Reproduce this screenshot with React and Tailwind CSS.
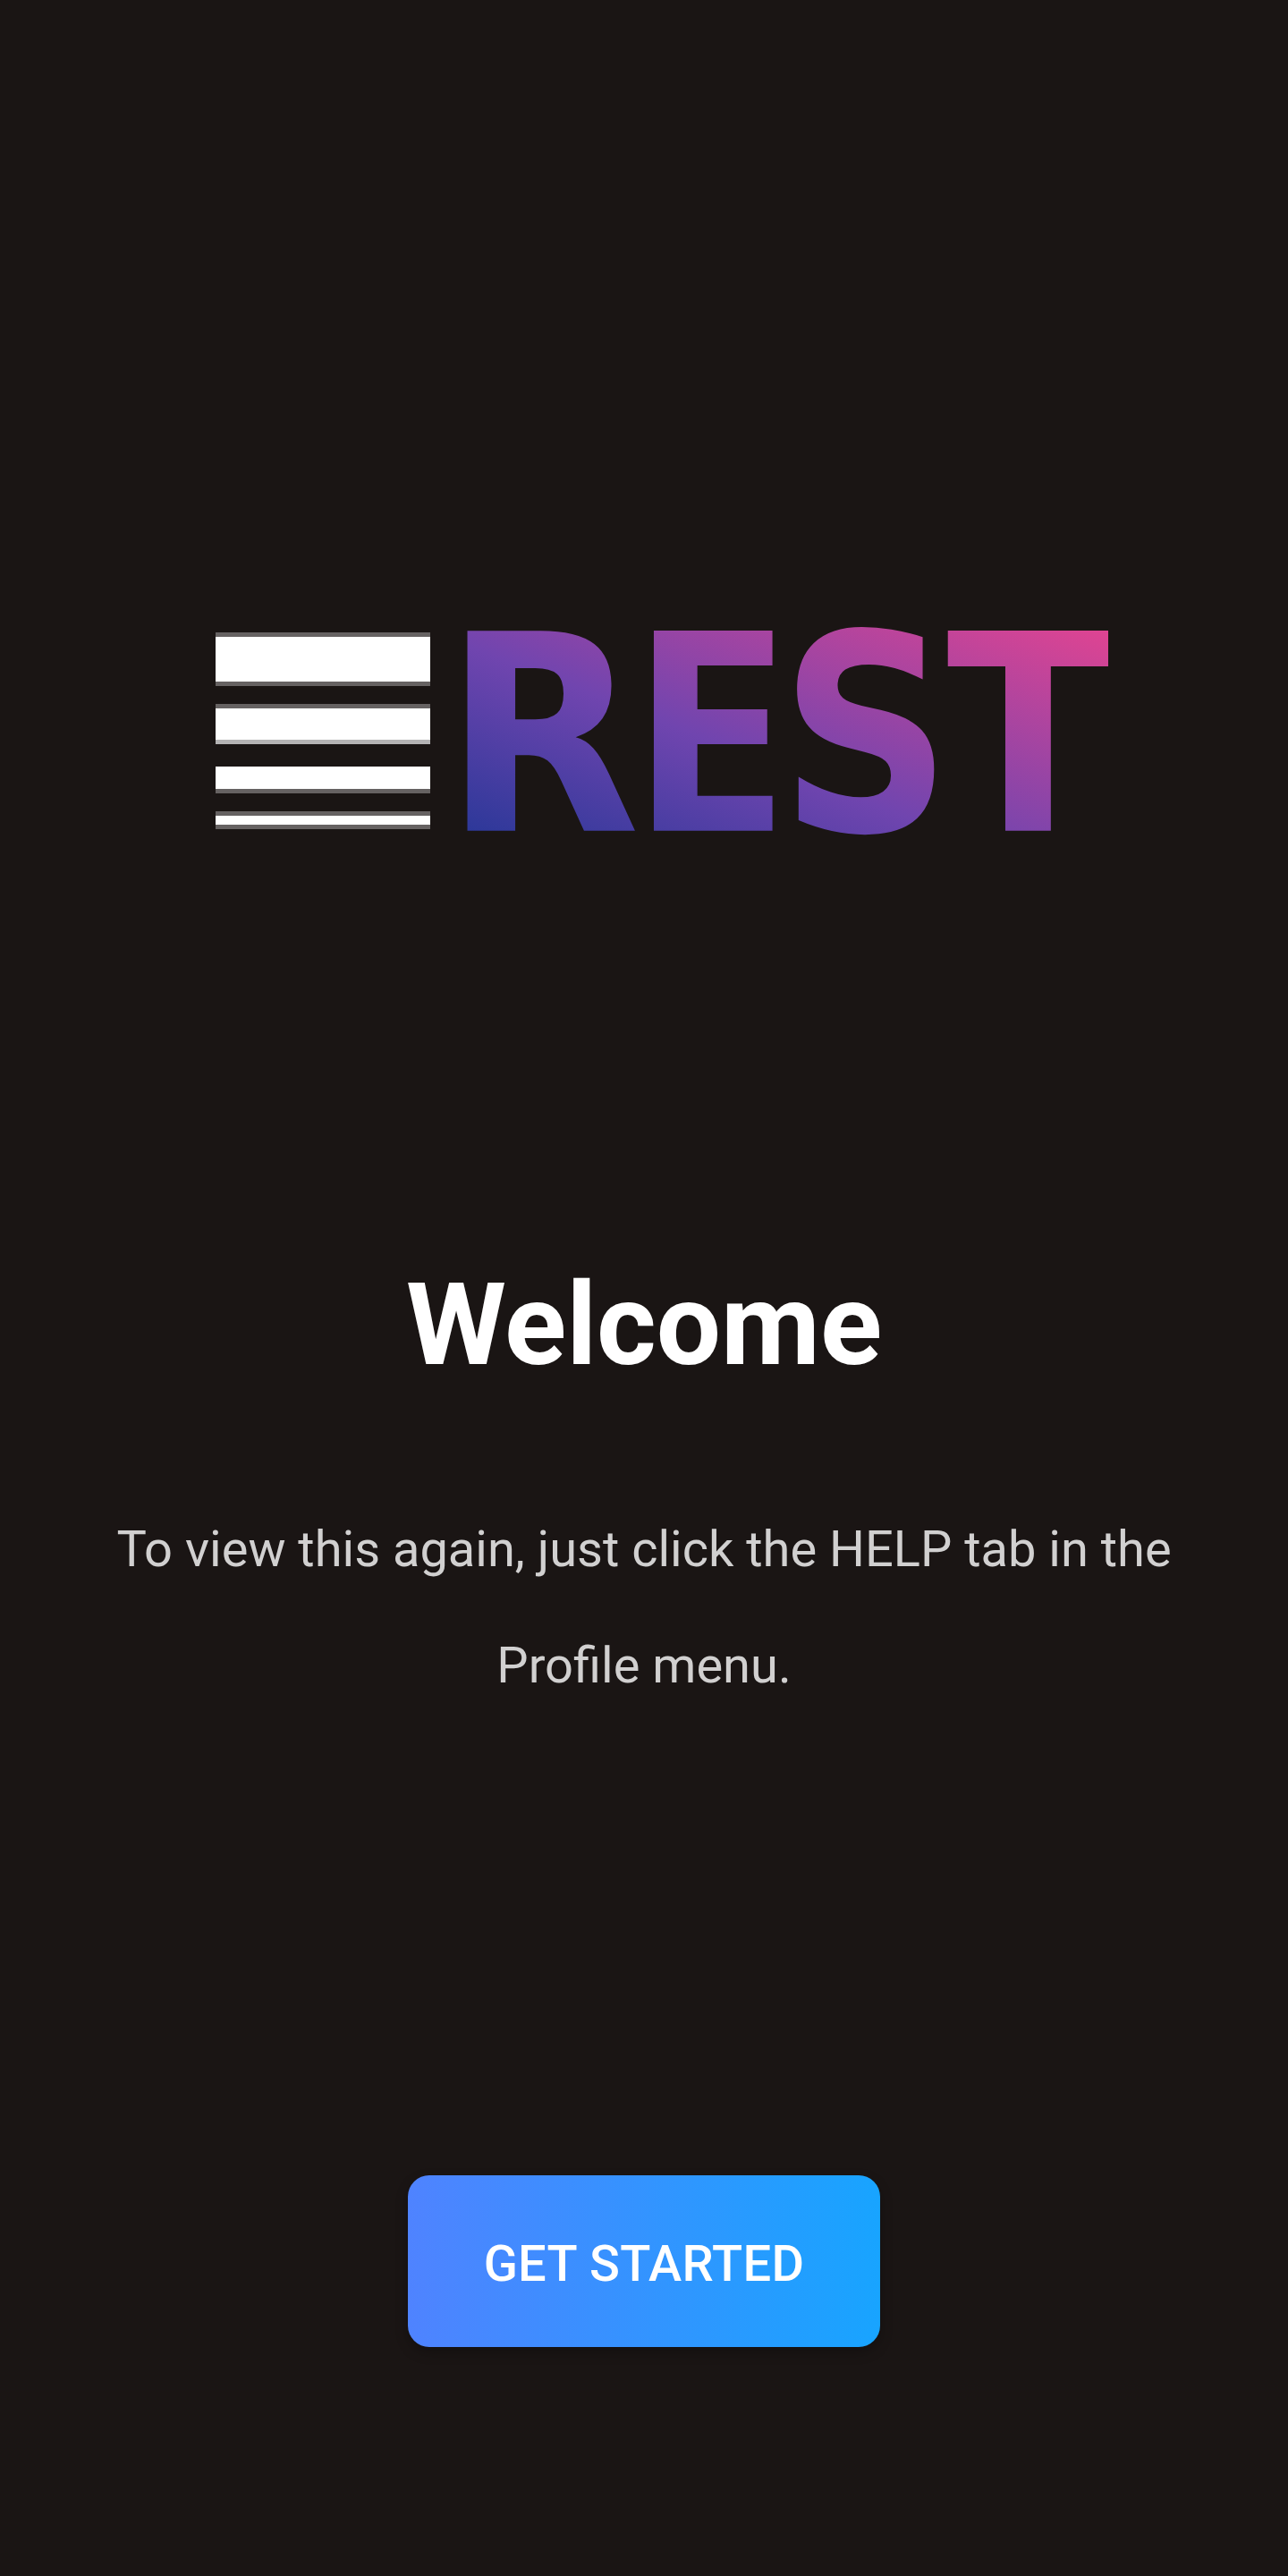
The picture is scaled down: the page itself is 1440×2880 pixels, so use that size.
const bars = [
  'mt-0 h-[60px] border-y-[5px] border-[#666262]',
  'mt-5 h-[45px] border-y-[5px] border-t-[#666262] border-b-[#b4b3b4]',
  'mt-[25px] h-[30px] border-b-[5px] border-[#666262]',
  'mt-5 h-5 border-y-[5px] border-[#666262]',
];

// Each letter is stretched horizontally to the wordmark's proportions.
const letters = [
  { char: 'R', x: 496.4, scale: 0.928, size: 306.8, font: 'DejaVu Sans' },
  { char: 'E', x: 701.9, scale: 1.03, size: 313.3, font: 'Noto Sans' },
  { char: 'S', x: 872, scale: 0.868, size: 306.8, font: 'DejaVu Sans' },
  { char: 'T', x: 1053.4, scale: 1.062, size: 313.3, font: 'Noto Sans' },
];

function Wordmark() {
  return (
    <svg className="ml-8 shrink-0 overflow-visible" width="740" height="240" viewBox="513 707 740 240">
      <defs>
        {letters.map((l) => (
          <linearGradient
            key={l.char}
            id={`fill-${l.char}`}
            gradientUnits="userSpaceOnUse"
            x1="522"
            y1="933"
            x2="693.3"
            y2="493.8"
            gradientTransform={`scale(${1 / l.scale} 1) translate(${-l.x} 0)`}
          >
            <stop offset="0" stopColor="#2c3899" />
            <stop offset="0.417" stopColor="#7045af" />
            <stop offset="1" stopColor="#de4492" />
          </linearGradient>
        ))}
      </defs>
      {letters.map((l) => (
        <text
          key={l.char}
          transform={`translate(${l.x} 0) scale(${l.scale} 1)`}
          y="928.8"
          fontFamily={l.font}
          fontWeight="700"
          fontSize={l.size}
          fill={`url(#fill-${l.char})`}
        >
          {l.char}
        </text>
      ))}
    </svg>
  );
}

export default function App() {
  return (
    <main className="flex h-[2880px] w-[1440px] flex-col items-center bg-[#1a1514] pt-[707px] font-['Roboto',sans-serif]">
      <div className="flex h-[243px] w-full items-start pl-[241px]">
        <div className="w-[240px] shrink-0">
          {bars.map((bar) => (
            <div key={bar} className={`bg-white ${bar}`} />
          ))}
        </div>
        <Wordmark />
      </div>
      <h1 className="mt-[456px] text-[128px] leading-[150px] font-bold text-white">Welcome</h1>
      <p className="mt-[111px] w-[1300px] text-center text-[56px] leading-[130px] text-[#d1d0d0]">
        To view this again, just click the HELP tab in the
        <br />
        Profile menu.
      </p>
      <button className="mt-[505px] h-[192px] w-[528px] rounded-[24px] bg-linear-to-r/srgb from-[#4f83ff] to-[#18a4ff] pt-[6px] text-[56px] font-medium tracking-[0.3px] text-white shadow-[0_6px_14px_rgba(0,0,0,0.25)]">
        GET STARTED
      </button>
    </main>
  );
}
